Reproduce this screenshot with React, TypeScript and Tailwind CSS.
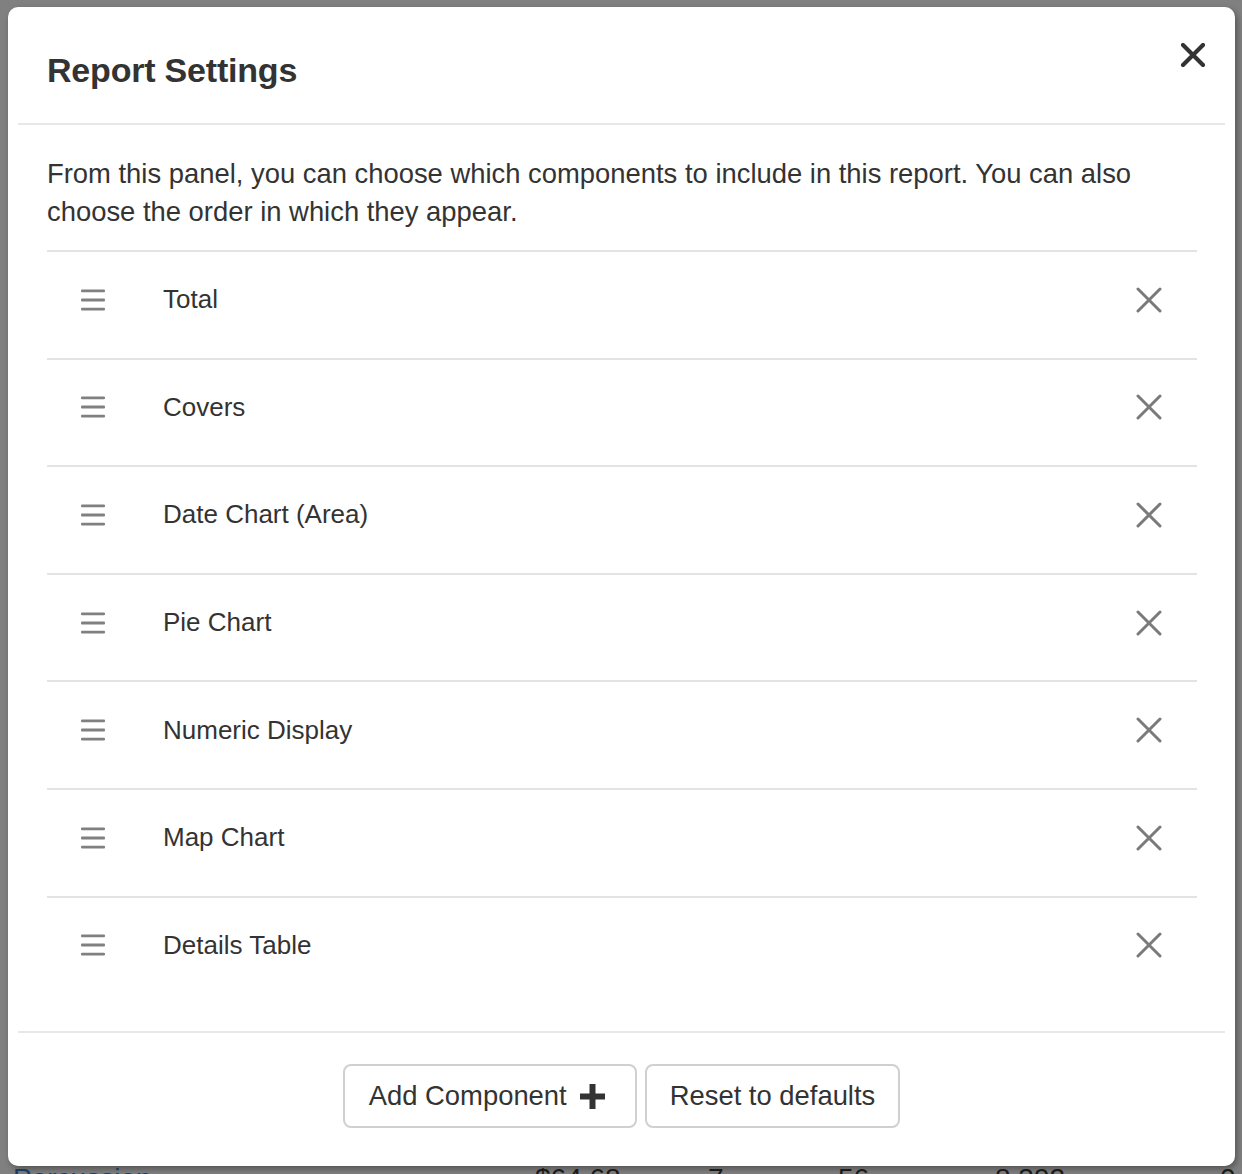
import React from 'react';

const items = [
  'Total',
  'Covers',
  'Date Chart (Area)',
  'Pie Chart',
  'Numeric Display',
  'Map Chart',
  'Details Table',
];

function DragHandle() {
  return (
    <svg width="24" height="24" viewBox="0 0 24 24" className="shrink-0">
      <rect x="0" y="1.5" width="24" height="2.8" rx="1" fill="#808080" />
      <rect x="0" y="10.6" width="24" height="2.8" rx="1" fill="#808080" />
      <rect x="0" y="19.7" width="24" height="2.8" rx="1" fill="#808080" />
    </svg>
  );
}

function CrossIcon({ size, stroke, color }: { size: number; stroke: number; color: string }) {
  return (
    <svg width={size} height={size} viewBox={`0 0 ${size} ${size}`} className="shrink-0">
      <path
        d={`M2 2 L${size - 2} ${size - 2} M${size - 2} 2 L2 ${size - 2}`}
        stroke={color}
        strokeWidth={stroke}
        strokeLinecap="round"
      />
    </svg>
  );
}

function PlusIcon() {
  return (
    <svg width="25" height="25" viewBox="0 0 25 25" className="shrink-0">
      <rect x="9.5" y="0" width="6" height="25" fill="#333" />
      <rect x="0" y="9.5" width="25" height="6" fill="#333" />
    </svg>
  );
}

export default function App() {
  return (
    <div
      className="w-[1242px] h-[1174px] overflow-hidden bg-[#808080] flex flex-col"
      style={{ fontFamily: '"Liberation Sans", Arial, sans-serif' }}
    >
      {/* Modal */}
      <div className="mt-[7px] ml-[8px] w-[1227px] h-[1159px] shrink-0 bg-white rounded-[10px] shadow-[2px_3px_6px_rgba(0,0,0,0.35)] flex flex-col">
        {/* Header */}
        <div className="h-[116px] flex items-start justify-between pl-[39px] pr-[30px]">
          <h4 className="mt-[44px] text-[34px] leading-[38px] font-semibold text-[#333] tracking-[-0.2px]">
            Report Settings
          </h4>
          <button className="mt-[36px] p-0">
            <CrossIcon size={24} stroke={4.2} color="#333" />
          </button>
        </div>
        <div className="mx-[10px] h-[2px] bg-[#e8e8e8]" />

        {/* Body */}
        <div className="pt-[30px] pl-[39px] pr-[38px] flex-1">
          <p className="text-[27.4px] leading-[38px] text-[#333]">
            From this panel, you can choose which components to include in this report. You can also choose the order in which they appear.
          </p>
          <ul className="mt-[19px]">
            {items.map((name) => (
              <li
                key={name}
                className="h-[107.6px] flex items-center border-t-2 border-[#e3e3e3] pl-[34px] pr-[35px] pb-[10px]"
              >
                <DragHandle />
                <span className="ml-[58px] flex-1 text-[26px] text-[#333]">{name}</span>
                <CrossIcon size={26} stroke={3} color="#7a7a7a" />
              </li>
            ))}
          </ul>
        </div>

        {/* Footer */}
        <div className="mx-[10px] h-[2px] bg-[#e8e8e8]" />
        <div className="h-[133px] flex justify-center items-start pt-[31px] gap-[8px]">
          <button className="h-[64px] pl-[24px] pr-[30px] flex items-center gap-[13px] border-2 border-[#d0d0d0] rounded-[8px] bg-white text-[27.4px] text-[#333]">
            Add Component
            <PlusIcon />
          </button>
          <button className="h-[64px] px-[23px] flex items-center border-2 border-[#d0d0d0] rounded-[8px] bg-white text-[27.4px] text-[#333]">
            Reset to defaults
          </button>
        </div>
      </div>

      {/* Background row peeking out under the modal */}
      <div className="h-[8px] overflow-hidden">
        <div className="flex items-start text-[28px] leading-[28px] -mt-[1px] text-[#1a1a1a]">
          <span className="ml-[13px] w-[522px] text-[#1c3c5e]">Percussion</span>
          <span className="w-[173px]">$64.68</span>
          <span className="w-[130px]">7</span>
          <span className="w-[157px]">56</span>
          <span className="w-[225px]">8,392</span>
          <span>0</span>
        </div>
      </div>
    </div>
  );
}
